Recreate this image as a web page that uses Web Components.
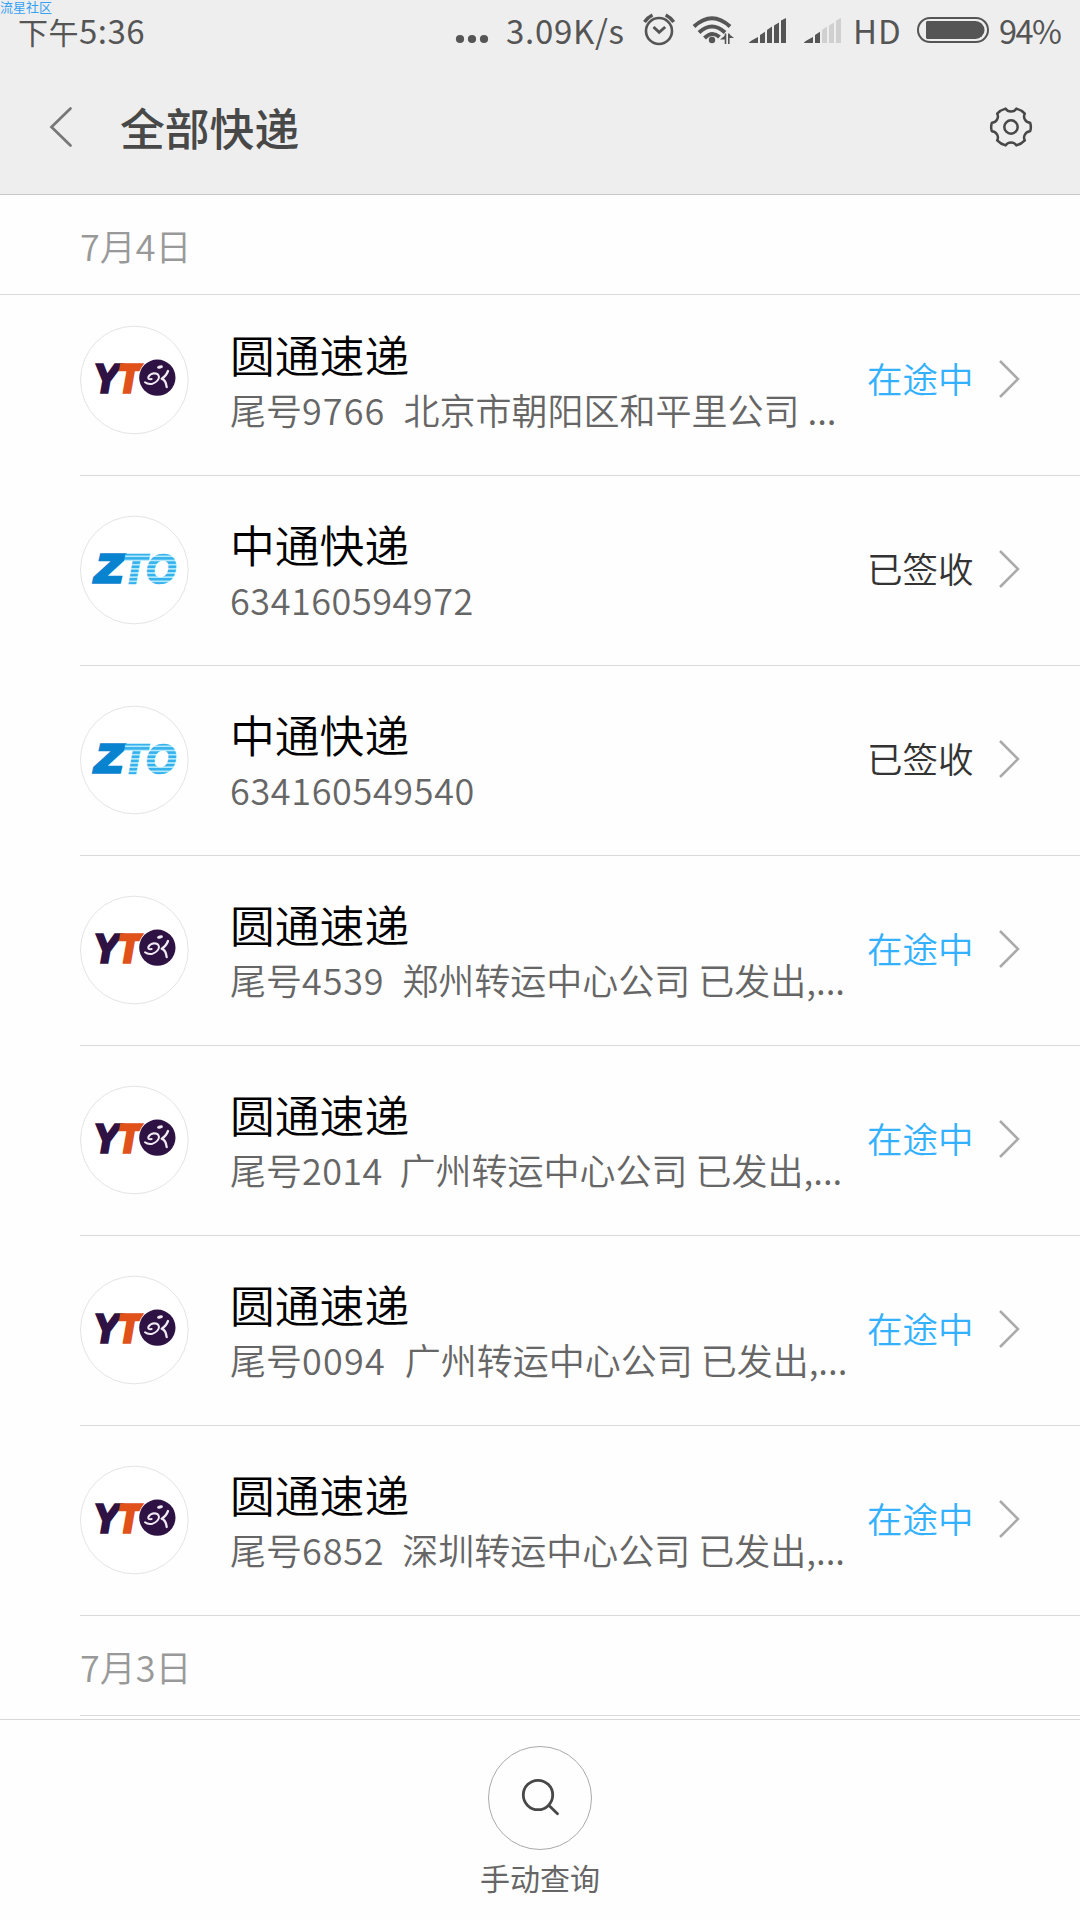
<!DOCTYPE html>
<html lang="zh-CN">
<head>
<meta charset="utf-8">
<title>全部快递</title>
<style>
html,body{margin:0;padding:0}
body{width:1080px;height:1920px;overflow:hidden;background:#fefefe;font-family:"Noto Sans CJK SC",sans-serif;color:#666}
</style>
</head>
<body>
<express-app></express-app>
<script>
const define = (name, html, setup) => customElements.define(name, class extends HTMLElement {
  constructor() {
    super();
    this.attachShadow({ mode: 'open' }).innerHTML = html;
  }
  connectedCallback() { if (setup) setup(this, this.shadowRoot); }
});

define('status-bar', `<style>
:host{display:flex;align-items:flex-start;height:62px;padding:0 19px 0 18px;color:#555;position:relative;white-space:pre;font-size:33px}
.mark{position:absolute;left:0;top:0;font-size:13px;line-height:13px;color:#35a2f2}
span{line-height:34px;margin-top:12.500px}
.mark{margin:0}
.time{flex:1;letter-spacing:.5px}.cjk{font-size:30px;margin:0}
svg{display:block;flex:none;height:62px}
.speed{width:118px;letter-spacing:.7px}.hd{width:50px;letter-spacing:1px}.pct{width:62px;letter-spacing:-1.6px;font-size:32.500px}
</style>
<span class="mark">流星社区</span>
<span class="time"><span class="cjk">下午</span>5:36</span>
<svg width="51" viewBox="455 0 51 62" fill="#555"><circle cx="460" cy="39" r="4.1"/><circle cx="472" cy="39" r="4.1"/><circle cx="484" cy="39" r="4.1"/></svg>
<span class="speed">3.09K/s</span>
<svg width="229" viewBox="624 0 229 62" fill="none" stroke="#555">
<circle cx="659" cy="31" r="13" stroke-width="2.6"/><path d="M653.5 27l5.7 5.300 6-5.300" stroke-width="3"/>
<path d="M644.500 22q3-4.500 8-7M673.700 22q-3-4.500-8-7" stroke-width="3.400"/>
<path d="M694 26.500Q712 10 730 26.500M699 32.500Q712 20.500 725 32.500M704.500 38Q712 30.500 719.500 37" stroke-width="4"/>
<circle cx="712" cy="40" r="3.200" fill="#555" stroke="none"/>
<path d="M725.500 33.500v10.500M728.800 33.500v10.500" stroke-width="1.600"/><path d="M720 39.500l5-4v4zM734 38l-5-4v4z" fill="#555" stroke="none"/>
<g fill="#555" stroke="none">
<path d="M749 42.800q0-1.200 9-5.800v6h-9z"/><path d="M760 35l5-3.200V43h-5zM767 30l5-3.500V43h-5zM774 25.500l5-3V43h-5zM781 20.500l5-2.500V43h-5z"/>
<path d="M804 42.800q0-1.200 9-5.800v6h-9zM815 35l5-3.200V43h-5z"/><path fill="#d0d0d0" d="M822 30l5-3.500V43h-5zM829 25.500l5-3V43h-5zM836 20.500l5-2.500V43h-5z"/></g>
</svg>
<span class="hd">HD</span>
<svg width="96" viewBox="903 0 96 62"><rect x="918" y="18" width="70" height="24" rx="12" fill="none" stroke="#555" stroke-width="2"/><path d="M927 21h48.500a9 9 0 0 1 0 18H927l-1-1V22z" fill="#555"/></svg>
<span class="pct">94%</span>`);

define('title-bar', `<style>
:host{display:flex;align-items:center;height:132px;border-bottom:1px solid #c8c8c8;box-sizing:content-box;color:#484848}
svg{flex:none;display:block}
h1{margin:0 0 3px;flex:1;font-size:44.8px;font-weight:500;line-height:60px;white-space:nowrap}
</style>
<svg width="120" height="132" viewBox="0 62 120 132"><path d="M70.500 108.500L51.500 127l19 18.500" fill="none" stroke="#777" stroke-width="2.700" stroke-linecap="round"/></svg>
<h1><slot></slot></h1>
<svg width="110" height="132" viewBox="970 62 110 132" fill="none" stroke="#484848" stroke-width="2.500" stroke-linejoin="round">
<circle cx="1011" cy="127" r="6.700"/>
<path d="M1005.600 108.600Q1007.300 111.500 1011 111.500Q1014.700 111.500 1016.400 108.600Q1021.500 110 1024.800 113.600Q1023.200 116.600 1025 119.700Q1026.700 122.800 1030.200 122.800Q1031.500 127.500 1030.200 131.200Q1026.700 131.500 1025 134.300Q1023.200 137.400 1024.800 140.400Q1021.500 144 1016.400 145.400Q1014.700 142.500 1011 142.500Q1007.300 142.500 1005.600 145.400Q1000.500 144 997.200 140.400Q998.800 137.400 997 134.300Q995.300 131.500 991.800 131.200Q990.500 127.500 991.800 122.800Q995.300 122.800 997 119.700Q998.800 116.600 997.200 113.600Q1000.500 110 1005.600 108.600Z"/></svg>`);

define('date-heading', `<style>
:host{display:flex;align-items:center;height:99px;padding:0 80px;border-bottom:1px solid #dadada;font-size:36px;line-height:50px;color:#999}
:host([inset]){margin-left:80px;padding:0}
span{font-weight:350}
</style><span><slot></slot></span>`);

const yto = `<text x="105" y="246" font-size="116" textLength="72" lengthAdjust="spacingAndGlyphs" fill="#2f1244" stroke="#2f1244" stroke-width="10">Y</text>
<text x="177" y="246" font-size="116" textLength="64" lengthAdjust="spacingAndGlyphs" fill="#e0521a" stroke="#e0521a" stroke-width="11">T</text>
<circle cx="294" cy="203" r="57" fill="#fff"/><circle cx="294" cy="203" r="54.500" fill="#2f1244"/>
<g fill="none" stroke="#efeaf3" stroke-linecap="round" stroke-linejoin="round"><ellipse cx="302" cy="171" rx="9" ry="5" transform="rotate(-15 302 171)" fill="#efeaf3" stroke="none"/>
<path d="M257 217Q266 224 280 221Q298 214 299 201Q297 190 284 190Q272 192 267 201Q265 209 277 207" stroke-width="6"/><path d="M326 183Q320 199 307 206Q320 211 322 231" stroke-width="7"/></g>`;
const zto = `<defs><pattern id="p" width="20" height="12.500" y="159" patternUnits="userSpaceOnUse"><rect width="20" height="12.500" fill="#b4e8fc"/><rect width="20" height="7.500" fill="#35b2ec"/></pattern></defs>
<text x="108" y="247" font-size="116" textLength="82" lengthAdjust="spacingAndGlyphs" fill="#0883d0" stroke="#0883d0" stroke-width="11">Z</text>
<text x="190" y="249" font-size="120" textLength="70" lengthAdjust="spacingAndGlyphs" fill="url(#p)" stroke="url(#p)" stroke-width="7">T</text>
<text x="260" y="249" font-size="120" textLength="89" lengthAdjust="spacingAndGlyphs" fill="url(#p)" stroke="url(#p)" stroke-width="7">O</text>`;

define('carrier-logo', `<style>:host{display:block;width:110px;height:110px}svg{display:block}text{font-family:"Liberation Sans",sans-serif;font-weight:bold;font-style:italic}</style>
<svg width="110" height="110" viewBox="59 45 330 330"></svg>`, (el, root) => {
  root.querySelector('svg').innerHTML = '<circle cx="225" cy="210" r="161.500" fill="#fff" stroke="#e4e4e4" stroke-width="3"/>' + (el.getAttribute('name') === 'zto' ? zto : yto);
});

define('parcel-row', `<style>
:host{display:flex;height:189px;margin-left:80px;border-bottom:1px solid #dadada;box-sizing:content-box}
:host([first]){height:180px}
:host([first]) .in{margin-top:-9px}
.in{display:flex;align-items:center;height:189px;flex:1}
.logo{margin:0 41px 1px -1px}
.txt{width:637px;white-space:pre}
.name{font-size:44.800px;line-height:56px;color:#000;font-weight:350}
.sub{font-size:36px;line-height:54px;color:#666;font-weight:350}
.state{width:125px;font-size:35.500px;line-height:50px;color:#333;margin-bottom:5px;white-space:nowrap;font-weight:350}
:host([moving]) .state{color:#33b1ff}
svg{display:block;margin-bottom:3px}
</style><div class="in"><div class="logo"><slot name="logo"></slot></div>
<div class="txt"><div class="name"><slot name="name"></slot></div><div class="sub"><slot></slot></div></div>
<div class="state"><slot name="state"></slot></div>
<svg width="30" height="44" viewBox="0 0 30 44"><path d="M8 4L26 22L8 40" fill="none" stroke="#aaa" stroke-width="2.500"/></svg></div>`);

define('bottom-action', `<style>
:host{display:flex;flex-direction:column;align-items:center;height:200px;border-top:1px solid #d8d8d8;background:#fefefe;color:#666;font-size:30px;line-height:40px}
svg{display:block;margin:25px 0 6px}
</style><svg width="106" height="106" viewBox="487 1745 106 106" fill="none"><circle cx="540" cy="1798" r="51.500" stroke="#aaa"/><g stroke="#484848" stroke-width="2.800" stroke-linecap="round"><circle cx="538" cy="1795" r="14.700"/><path d="M549 1805.500l8.500 8.300"/></g></svg><span><slot></slot></span>`);

// carrier, name, tracking digits, latest event, digit spacing
const parcels = [
  ['yto', '圆通速递', '9766', '北京市朝阳区和平里公司 ...', 1.05],
  ['zto', '中通快递', '634160594972', '', .55],
  ['zto', '中通快递', '634160549540', '', .65],
  ['yto', '圆通速递', '4539', '郑州转运中心公司 已发出,...', .85],
  ['yto', '圆通速递', '2014', '广州转运中心公司 已发出,...', .4],
  ['yto', '圆通速递', '0094', '广州转运中心公司 已发出,...', 1.25],
  ['yto', '圆通速递', '6852', '深圳转运中心公司 已发出,...', .85]
];
define('express-app', `<style>
:host{display:flex;flex-direction:column;width:1080px;height:1920px}
header{background:#eee}
main{flex:1;min-height:0;overflow:hidden}
</style><header><status-bar></status-bar><title-bar>全部快递</title-bar></header>
<main><date-heading>7月4日</date-heading>${parcels.map(([c, n, d, s, ls], i) =>
  `<parcel-row${s ? ' moving' : ''}${i ? '' : ' first'}><carrier-logo slot="logo" name="${c}"></carrier-logo><span slot="name">${n}</span>${s ? '尾号' : ''}<span style="letter-spacing:${ls}px">${d}${s ? '  ' : ''}</span>${s}<span slot="state">${s ? '在途中' : '已签收'}</span></parcel-row>`).join('')}<date-heading inset>7月3日</date-heading></main>
<bottom-action>手动查询</bottom-action>`);
</script>
</body>
</html>
